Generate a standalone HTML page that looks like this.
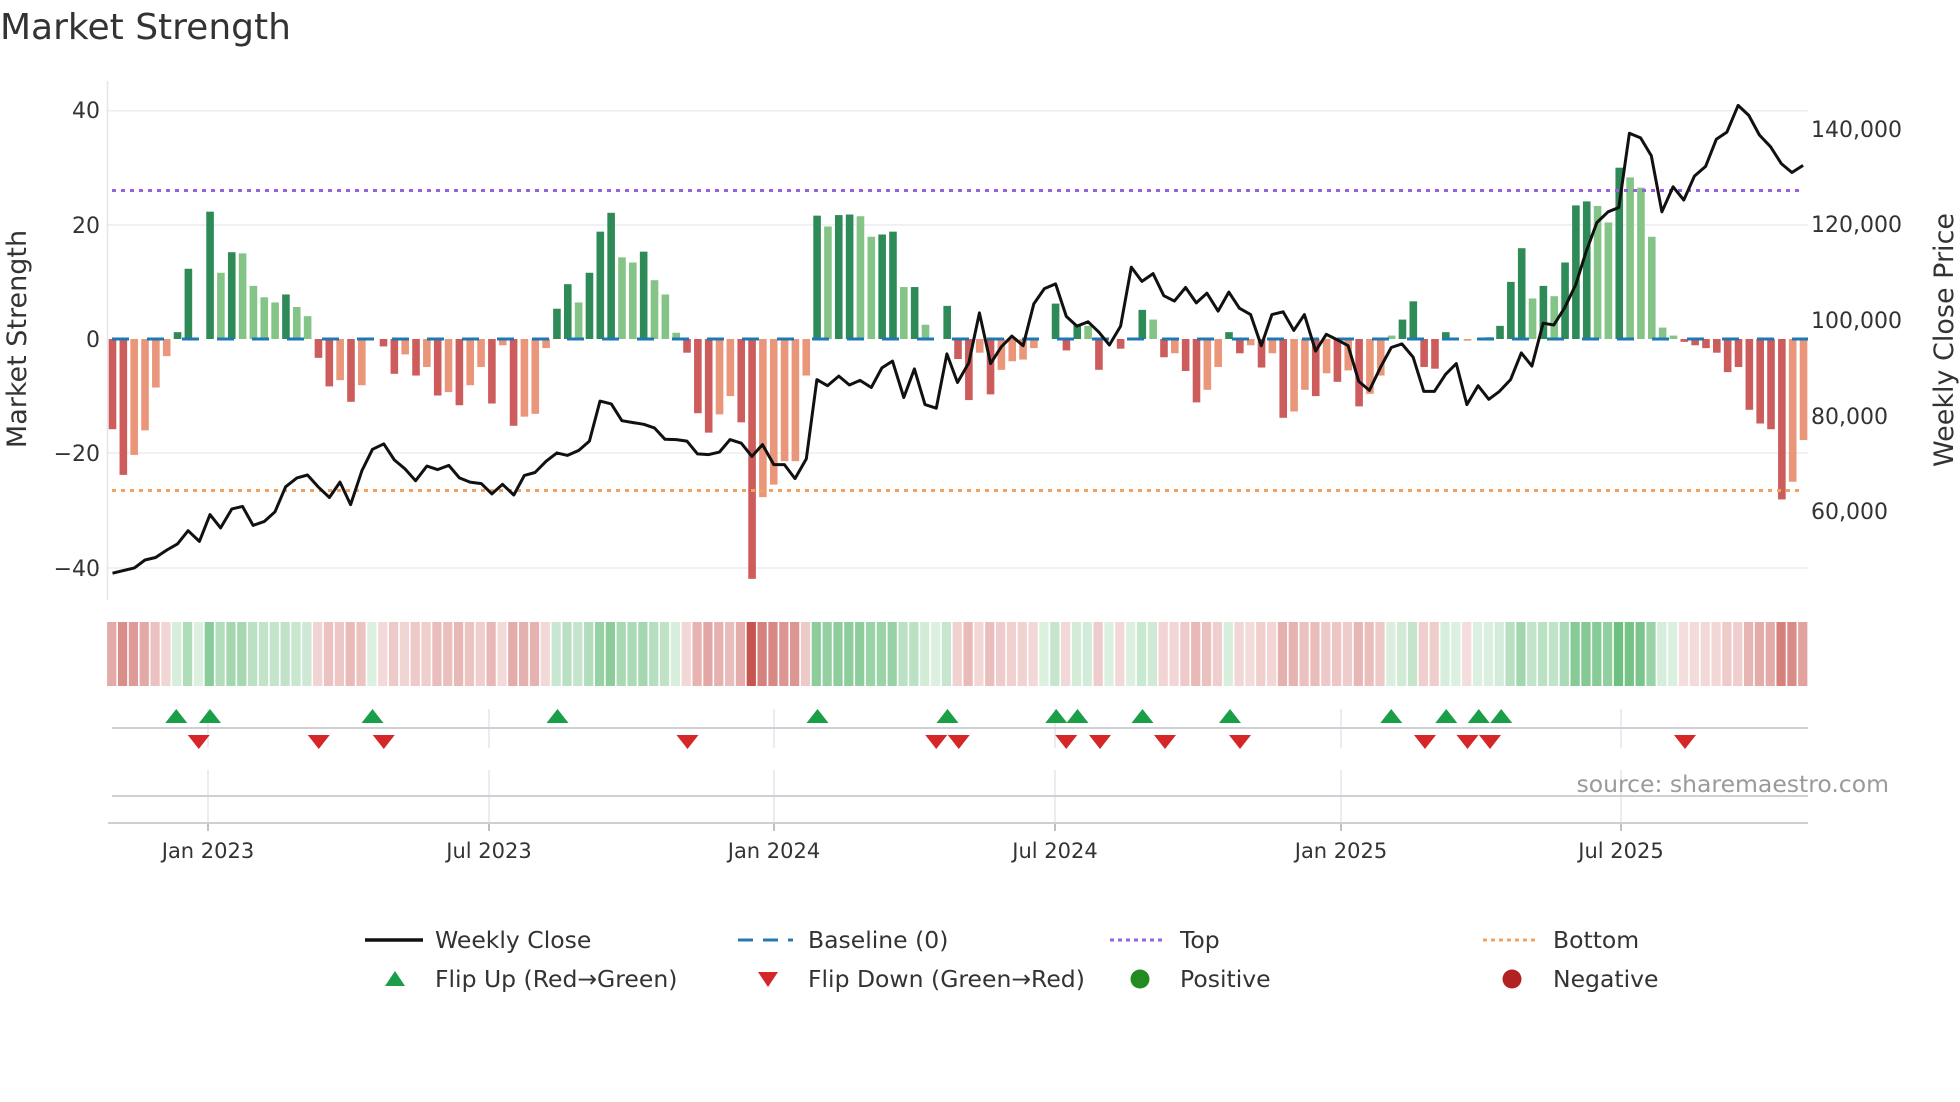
<!DOCTYPE html>
<html><head><meta charset="utf-8"><style>
html,body{margin:0;padding:0;background:#fff;width:1960px;height:1102px;overflow:hidden}
svg{display:block;font-family:"DejaVu Sans","Liberation Sans",sans-serif}
</style></head><body>
<svg id="s" width="1960" height="1102" viewBox="0 0 1960 1102" xmlns="http://www.w3.org/2000/svg">
<text x="0" y="39" font-size="36" fill="#333">Market Strength</text>
<g stroke="#ececf2" stroke-width="1.5">
<line x1="108" y1="110.7" x2="1808" y2="110.7"/><line x1="108" y1="225" x2="1808" y2="225"/>
<line x1="108" y1="453" x2="1808" y2="453"/><line x1="108" y1="568" x2="1808" y2="568"/>
</g>
<line x1="107.5" y1="81" x2="107.5" y2="600" stroke="#e6e6ea" stroke-width="1.5"/>
<g id="bars"></g>
<line x1="112" y1="339" x2="1808" y2="339" stroke="#1f77b4" stroke-width="3" stroke-dasharray="17,18"/>
<line x1="112" y1="190.5" x2="1802" y2="190.5" stroke="#9a62d8" stroke-width="3" stroke-dasharray="4,5"/>
<line x1="112" y1="490.5" x2="1802" y2="490.5" stroke="#f0a460" stroke-width="3" stroke-dasharray="4,5"/>
<polyline id="pl" fill="none" stroke="#111" stroke-width="3" stroke-linejoin="round"/>
<g font-size="22" fill="#333">
<text x="100" y="118" text-anchor="end">40</text>
<text x="100" y="233" text-anchor="end">20</text>
<text x="100" y="347" text-anchor="end">0</text>
<text x="100" y="461" text-anchor="end">−20</text>
<text x="100" y="576" text-anchor="end">−40</text>
<text x="1811" y="137">140,000</text>
<text x="1811" y="232">120,000</text>
<text x="1811" y="328">100,000</text>
<text x="1811" y="424">80,000</text>
<text x="1811" y="519">60,000</text>
</g>
<text transform="translate(26,339) rotate(-90)" text-anchor="middle" font-size="27" fill="#333">Market Strength</text>
<text transform="translate(1953,340) rotate(-90)" text-anchor="middle" font-size="27" fill="#333">Weekly Close Price</text>
<g id="heat"></g>
<g stroke="#e4e6ee" stroke-width="1.5" id="vg"></g>
<line x1="112" y1="728" x2="1808" y2="728" stroke="#d0d0d4" stroke-width="2"/>
<line x1="112" y1="796" x2="1808" y2="796" stroke="#d0d0d4" stroke-width="2"/>
<line x1="108" y1="823" x2="1808" y2="823" stroke="#cfcfd3" stroke-width="2"/>
<g id="tri"></g>
<text x="1889" y="792" text-anchor="end" font-size="23.5" fill="#9a9a9a">source: sharemaestro.com</text>
<g font-size="21" fill="#333" text-anchor="middle">
<text x="208" y="858">Jan 2023</text><text x="489" y="858">Jul 2023</text>
<text x="774" y="858">Jan 2024</text><text x="1055" y="858">Jul 2024</text>
<text x="1341" y="858">Jan 2025</text><text x="1621" y="858">Jul 2025</text>
</g>
<g font-size="23.5" fill="#333">
<line x1="365" y1="940" x2="423" y2="940" stroke="#111" stroke-width="3.5"/>
<text x="435" y="948">Weekly Close</text>
<line x1="738" y1="940" x2="793" y2="940" stroke="#2b78b0" stroke-width="3" stroke-dasharray="15,10"/>
<text x="808" y="948">Baseline (0)</text>
<line x1="1110" y1="940" x2="1165" y2="940" stroke="#9a62d8" stroke-width="3" stroke-dasharray="4,4"/>
<text x="1180" y="948">Top</text>
<line x1="1483" y1="940" x2="1538" y2="940" stroke="#f0a460" stroke-width="3" stroke-dasharray="4,4"/>
<text x="1553" y="948">Bottom</text>
<polygon points="385,986 405,986 395,971" fill="#1a9e48"/>
<text x="435" y="987">Flip Up (Red→Green)</text>
<polygon points="758,972 778,972 768,987" fill="#d62728"/>
<text x="808" y="987">Flip Down (Green→Red)</text>
<circle cx="1140" cy="979" r="9.5" fill="#228b22"/>
<text x="1180" y="987">Positive</text>
<circle cx="1512" cy="979" r="9.5" fill="#b22222"/>
<text x="1553" y="987">Negative</text>
</g>
</svg>
<script>
var NS="http://www.w3.org/2000/svg";
function el(t,a,p){var e=document.createElementNS(NS,t);for(var k in a)e.setAttribute(k,a[k]);p.appendChild(e);return e;}
var V=[[-15.8,1],[-23.8,1],[-20.3,0],[-16,0],[-8.5,0],[-3,0],[1.2,1],[12.3,1],[0,1],[22.3,1],[11.6,0],[15.2,1],[15,0],[9.3,0],[7.3,0],[6.4,0],[7.8,1],[5.6,0],[4,0],[-3.3,1],[-8.3,1],[-7.2,0],[-11,1],[-8.1,0],[0,0],[-1.3,1],[-6.1,1],[-2.7,0],[-6.4,1],[-4.9,0],[-9.9,1],[-9.3,0],[-11.6,1],[-8.1,0],[-4.9,0],[-11.3,1],[-1.1,0],[-15.2,1],[-13.6,0],[-13.1,0],[-1.6,0],[5.3,1],[9.6,1],[6.4,0],[11.6,1],[18.8,1],[22.1,1],[14.3,0],[13.4,0],[15.3,1],[10.3,0],[7.8,0],[1.1,0],[-2.4,1],[-13,1],[-16.4,1],[-13.2,0],[-10,0],[-14.6,1],[-42,1],[-27.7,0],[-25.5,0],[-21.4,0],[-21.4,0],[-6.4,0],[21.6,1],[19.7,0],[21.7,1],[21.8,1],[21.5,0],[17.9,0],[18.3,1],[18.8,1],[9.1,0],[9.1,1],[2.5,0],[0,0],[5.8,1],[-3.5,1],[-10.7,1],[-2.4,0],[-9.7,1],[-5.4,0],[-3.9,0],[-3.6,0],[-1.6,0],[0,0],[6.2,1],[-2,1],[2.6,1],[2.3,0],[-5.4,1],[0,0],[-1.7,1],[0,0],[5.1,1],[3.4,0],[-3.2,1],[-2.5,0],[-5.6,1],[-11.1,1],[-8.9,0],[-4.9,0],[1.2,1],[-2.5,1],[-1.1,0],[-5,1],[-2.5,0],[-13.8,1],[-12.7,0],[-8.9,0],[-10,1],[-6,0],[-7.5,1],[-5.5,0],[-11.8,1],[-9.6,0],[-6.4,0],[0.6,0],[3.4,1],[6.6,1],[-4.9,1],[-5.2,1],[1.2,1],[0,0],[-0.3,0],[0,0],[0.3,1],[2.3,1],[10,1],[15.9,1],[7.1,0],[9.3,1],[7.5,0],[13.4,1],[23.4,1],[24.1,1],[23.3,0],[20.4,0],[30,1],[28.3,0],[26.5,0],[17.9,0],[2,0],[0.6,0],[-0.5,1],[-1.1,1],[-1.6,1],[-2.4,1],[-5.8,1],[-4.9,1],[-12.4,1],[-14.8,1],[-15.8,1],[-28.1,1],[-25,0],[-17.7,0]];
var bars=document.getElementById('bars'),heat=document.getElementById('heat');
var U=5.71,Y0=339,W=10.84;
V.forEach(function(b,i){
 var v=b[0],x=112.5+W*i,c;
 if(v>=0)c=b[1]?'#2e8b57':'#84c487';else c=b[1]?'#cd5c5c':'#e9967a';
 var h=Math.abs(v)*U;
 if(h>0.3)el('rect',{x:x-3.8,y:v>=0?Y0-h:Y0,width:7.6,height:h,fill:c},bars);
 var a=Math.min(0.95,0.18+Math.abs(v)/40*0.75);
 var col=v>=0?'rgba(60,170,85,'+a+')':'rgba(195,75,70,'+a+')';
 el('rect',{x:x-5.4,y:622,width:W-1.6,height:64,fill:col},heat);
});
var z1=[[180,1437],[215,1422],[232,1400],[249,1393],[267,1372],[284,1355],[301,1318],[319,1348],[336,1273],[353,1310],[371,1257],[388,1250],[405,1303],[423,1292],[440,1265],[457,1195],[475,1170],[492,1162],[509,1195],[527,1225],[544,1182],[561,1245],[579,1150],[596,1090],[614,1075],[631,1120],[648,1145],[665,1178],[683,1137],[700,1147],[718,1135],[735,1170],[752,1182],[770,1186],[787,1215],[804,1188],[822,1218],[839,1163],[856,1155],[874,1123],[891,1100],[908,1107],[926,1093],[943,1067],[960,955],[978,963],[995,1010],[1012,1015],[1030,1020],[1047,1030],[1064,1062],[1082,1063],[1099,1067],[1116,1103],[1134,1105],[1151,1098],[1168,1063],[1186,1073],[1203,1110],[1220,1077],[1238,1133],[1255,1133],[1272,1172],[1290,1117],[1307,895],[1324,912],[1342,885],[1359,910],[1376,897],[1394,917],[1411,862],[1428,843],[1446,945],[1463,865],[1480,965],[1498,975],[1515,823],[1532,903],[1550,848],[1567,708]];
var z2=[[17,850],[34,803],[51,773],[69,800],[86,683],[103,640],[121,627],[138,718],[155,745],[173,733],[190,762],[207,798],[225,745],[242,580],[259,620],[277,598],[294,660],[311,675],[329,637],[346,680],[363,653],[381,703],[398,650],[415,695],[433,713],[450,800],[467,713],[485,705],[502,757],[519,713],[537,815],[554,768],[571,783],[589,800],[606,900],[623,925],[641,860],[658,805],[675,795],[693,832],[710,928],[727,928],[745,880],[762,850],[779,965],[797,912],[814,950],[831,928],[849,895],[866,820],[883,857],[901,737],[918,742],[935,695],[953,630],[970,535],[987,455],[1005,425],[1022,413],[1039,205],[1057,218],[1074,268],[1091,425],[1109,355],[1126,392],[1143,325],[1161,298],[1178,222],[1195,202],[1213,127],[1230,155],[1247,210],[1265,243],[1282,290],[1299,315],[1317,295]];
var pts=z1.map(function(p){return (p[0]/1.6).toFixed(1)+','+(60+p[1]/2.8).toFixed(1)}).concat(z2.map(function(p){return (980+p[0]/1.6).toFixed(1)+','+(60+p[1]/2.8).toFixed(1)}));
document.getElementById('pl').setAttribute('points',pts.join(' '));
var vg=document.getElementById('vg');
[208,489,774,1055,1341,1621].forEach(function(x){
 el('line',{x1:x,y1:709,x2:x,y2:748},vg);el('line',{x1:x,y1:770,x2:x,y2:823},vg);
 el('line',{x1:x,y1:823,x2:x,y2:831,stroke:'#aaa','stroke-width':1.5},vg);
});
var tri=document.getElementById('tri');
[141,168,298,446,654,758,845,862,914,984,1113,1157,1183,1201].forEach(function(d){var x=d*1.25;
 el('polygon',{points:(x-11)+',723 '+(x+11)+',723 '+x+',709',fill:'#1a9e48'},tri);});
[159,255,307,550,749,767,853,880,932,992,1140,1174,1192,1348].forEach(function(d){var x=d*1.25;
 el('polygon',{points:(x-11)+',735 '+(x+11)+',735 '+x+',749',fill:'#d62728'},tri);});
</script>
</body></html>
